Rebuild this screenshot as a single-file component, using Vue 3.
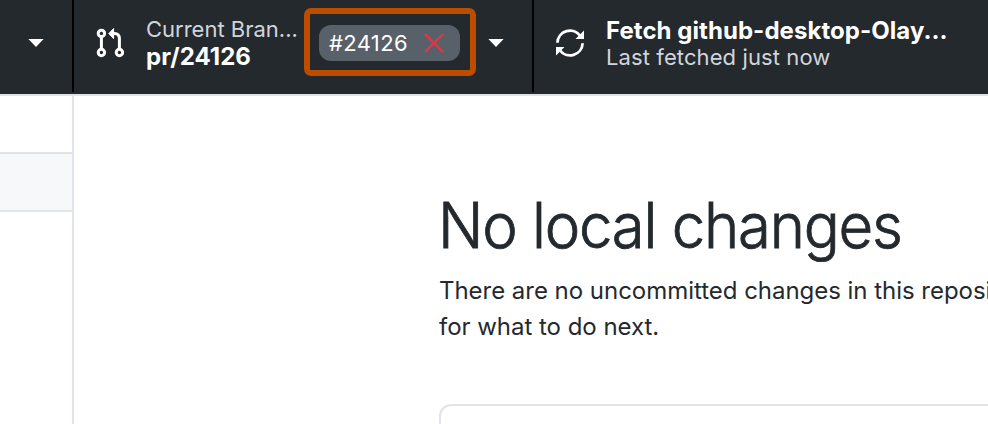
<script setup>
const branch = { label: 'Current Bran...', name: 'pr/24126', pr: '#24126' }
const remote = { action: 'Fetch github-desktop-Olay...', status: 'Last fetched just now' }
</script>

<template>
  <div class="app">
    <header class="toolbar">
      <div class="repo"><svg class="caret" viewBox="0 0 16 8"><path d="M.4 0h15.2L8 8z" /></svg></div>
      <div class="branch">
        <svg class="icon pull" viewBox="0 0 28 30">
          <g fill="none" stroke="#fff" stroke-width="3">
            <circle cx="5.4" cy="5.4" r="3.2" /><circle cx="5.4" cy="24.5" r="3.2" /><circle cx="23.4" cy="24.5" r="3.2" />
            <path d="M5.4 8.5v13M23.4 21.5V10.5Q23.4 5.6 18.5 5.6H16" />
          </g>
          <path fill="#fff" stroke="#fff" stroke-linejoin="round" d="M12.8 5.6L17.6.6v10z" />
        </svg>
        <div class="labels">
          <div class="muted current">{{ branch.label }}</div>
          <div class="strong name">{{ branch.name }}</div>
        </div>
        <div class="highlight">
          <div class="pill">
            <span class="number">{{ branch.pr }}</span>
            <svg class="cross" viewBox="0 0 20 20"><path d="M1.8 1.8l16.4 16.4M18.2 1.8L1.8 18.2" /></svg>
          </div>
        </div>
        <svg class="caret" viewBox="0 0 16 8"><path d="M.4 0h15.2L8 8z" /></svg>
      </div>
      <div class="fetch">
        <svg class="icon sync" viewBox="0 0 28 30">
          <path fill="none" stroke="#fff" stroke-width="2.8" d="M1.4 14.8A12.6 12.6 0 0 1 24.3 8M26.6 15.2A12.6 12.6 0 0 1 3.7 22" />
          <path fill="#fff" d="M28 2.5V11h-8.5zM0 27.5V19h8.5z" />
        </svg>
        <div class="labels">
          <div class="strong action">{{ remote.action }}</div>
          <div class="muted status">{{ remote.status }}</div>
        </div>
      </div>
    </header>
    <main class="body">
      <aside class="sidebar"><div class="row"></div></aside>
      <section class="content">
        <h1><span>No local changes</span></h1>
        <p><span>There are no uncommitted changes in this reposi</span><br /><span>for what to do next.</span></p>
        <div class="card"></div>
      </section>
    </main>
  </div>
</template>

<style>
body { background: #fff; overflow: hidden; }
</style>
<style scoped>
* { box-sizing: border-box; }
.app { width: 988px; height: 424px; overflow: hidden; display: flex; flex-direction: column; font-family: Inter, sans-serif; color: #24292e; }
.toolbar { display: flex; height: 96px; flex: none; background: #24292e; border-bottom: 2px solid #e1e4e8; color: #fff; padding-bottom: 2px; }
.repo { width: 74px; border-right: 2px solid #000; padding: 39px 0 0 28px; flex: none; }
.caret { display: block; width: 16px; height: 8px; fill: #fff; flex: none; }
.branch { width: 460px; border-right: 2px solid #000; display: flex; flex: none; padding-left: 22px; }
.branch > .caret { margin: 39px 0 0 12px; }
.icon { width: 28px; height: 30px; flex: none; margin-top: 28px; }
.labels { white-space: nowrap; font-size: 22px; flex: none; }
.branch .labels { width: 158px; margin-left: 22px; padding-top: 16px; }
.labels div { line-height: 27px; }
.muted { color: #d1d5da; }
.labels .strong { font-size: 24px; font-weight: 700; letter-spacing: .05px; }
.highlight { width: 172px; height: 68px; margin-top: 8px; border: 6px solid #bc4c00; border-radius: 7px; padding: 11px 9px; flex: none; }
.pill { height: 36px; width: 141px; border-radius: 12px; background: #586069; display: flex; align-items: center; padding-left: 10px; }
.number { width: 95px; font-size: 22px; line-height: 36px; letter-spacing: .35px; }
.cross { width: 20px; height: 20px; fill: none; stroke: #d73a49; stroke-width: 2.6; stroke-linecap: round; }
.fetch { display: flex; padding-left: 22px; }
.fetch .labels { margin-left: 22px; padding-top: 17px; }
.status { letter-spacing: .1px; }
.body { display: flex; flex: 1; }
.sidebar { width: 74px; border-right: 2px solid #e1e4e8; padding-top: 56px; flex: none; }
.row { height: 60px; border: solid #e1e4e8; border-width: 2px 0; background: #f6f8fa; }
.content { flex: 1; padding: 89px 0 0 365px; min-width: 0; overflow: hidden; white-space: nowrap; }
h1 { margin: 0; font-size: 63px; font-weight: 300; line-height: 80px; }
h1 span { display: inline-block; transform: scaleX(.95); transform-origin: 0 0; letter-spacing: -1.3px; margin-left: -1px; -webkit-text-stroke: .8px #24292e; }
p { margin: 8px 0 0; font-size: 24px; line-height: 36px; letter-spacing: -.03px; }
.card { width: 700px; height: 100px; margin-top: 59px; border: 2px solid #e1e4e8; border-radius: 12px; }
</style>
